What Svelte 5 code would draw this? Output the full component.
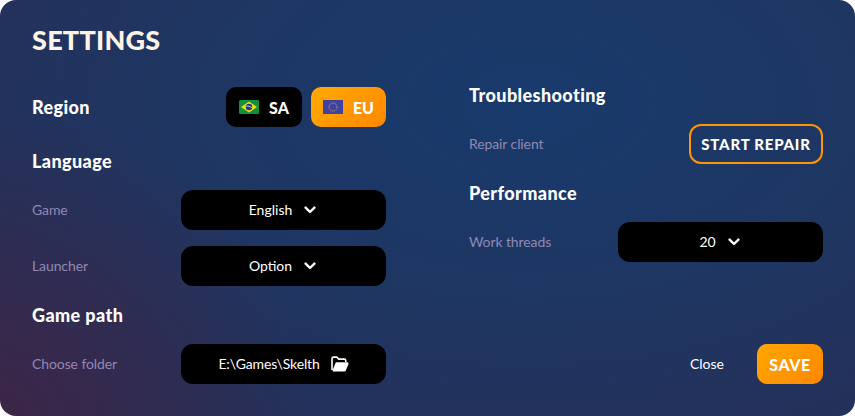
<script>
  let region = $state('EU');
</script>

{#snippet chevron()}
  <svg class="chevron" width="12" height="8" viewBox="0 0 12 8"><path d="M1.6 1.6 6 6 10.4 1.6" fill="none" stroke="#fff" stroke-width="2.4" stroke-linecap="round" stroke-linejoin="round"/></svg>
{/snippet}

<div class="modal">
  <h1>SETTINGS</h1>
  <div class="columns">
    <div class="col left">
      <div class="row">
        <h2 class="flat">Region</h2>
        <div class="regions">
          <button class="region sa" class:active={region === 'SA'} onclick={() => (region = 'SA')}>
            <svg width="20" height="14" viewBox="0 0 20 14">
              <rect width="20" height="14" rx="1.5" fill="#12913c"/>
              <path d="M10 1.6 18 7 10 12.400 2 7z" fill="#f4d90f"/>
              <circle cx="10" cy="7" r="3.200" fill="#1d3a86"/>
              <path d="M6.900 6.200c2-.4 4.400.2 6 1.600" fill="none" stroke="#fff" stroke-width=".7"/>
            </svg>
            <span>SA</span>
          </button>
          <button class="region eu" class:active={region === 'EU'} onclick={() => (region = 'EU')}>
            <svg width="20" height="14" viewBox="0 0 20 14">
              <rect width="20" height="14" fill="#3f42a0"/>
              <circle cx="10" cy="7" r="4" fill="none" stroke="#c9b955" stroke-width="1" stroke-dasharray="1 1.100"/>
            </svg>
            <span>EU</span>
          </button>
        </div>
      </div>
      <h2 class="lang">Language</h2>
      <div class="row">
        <span class="label">Game</span>
        <button class="select"><span>English</span>{@render chevron()}</button>
      </div>
      <div class="row next">
        <span class="label">Launcher</span>
        <button class="select"><span>Option</span>{@render chevron()}</button>
      </div>
      <h2>Game path</h2>
      <div class="row">
        <span class="label">Choose folder</span>
        <button class="select path">
          <span>E:\Games\Skelth</span>
          <svg width="18" height="16" viewBox="0 0 18 16">
            <path d="M1 14V2.700C1 1.800 1.700 1.100 2.600 1.100h3.200l2 2h5.400c.9 0 1.600.7 1.600 1.600V6" fill="none" stroke="#fff" stroke-width="1.600" stroke-linejoin="round"/>
            <path d="M2.800 15.500c-.9 0-1.400-.8-1.100-1.600l2.700-6.700c.2-.5.700-.9 1.300-.9h10.700c.9 0 1.400.8 1.100 1.600l-2.700 6.700c-.2.500-.7.900-1.300.9z" fill="#fff"/>
          </svg>
        </button>
      </div>
    </div>

    <div class="col right">
      <h2 class="flat">Troubleshooting</h2>
      <div class="row">
        <span class="label">Repair client</span>
        <button class="repair">START REPAIR</button>
      </div>
      <h2>Performance</h2>
      <div class="row">
        <span class="label">Work threads</span>
        <button class="select"><span>20</span>{@render chevron()}</button>
      </div>
      <div class="footer">
        <button class="close">Close</button>
        <button class="save">SAVE</button>
      </div>
    </div>
  </div>
</div>

<style>
  :global(body) {
    margin: 0;
    background: #fff;
  }

  .modal {
    box-sizing: border-box;
    width: 855px;
    height: 416px;
    padding: 22px 32px 32px;
    border-radius: 16px;
    color: #fff;
    font-family: "Lato", "Open Sans", sans-serif;
    background:
      radial-gradient(circle at 0% 100%, rgba(66, 36, 68, 0.8) 0, rgba(60, 36, 70, 0) 32%),
      radial-gradient(ellipse at 62% 25%, #183a6c 0, #1e3662 45%, #272e56 100%);
    background-color: #22335c;
  }

  h1 {
    margin: 0;
    height: 36px;
    line-height: 36px;
    font-size: 27px;
    font-weight: 900;
    letter-spacing: 0.25px;
    color: #fdf3e6;
  }

  .columns {
    display: grid;
    grid-template-columns: 354px 354px;
    justify-content: space-between;
    margin-top: 25px;
    height: 301px;
  }

  .col {
    display: flex;
    flex-direction: column;
  }

  .left {
    padding-top: 4px;
  }

  h2 {
    margin: 17px 0;
    height: 24px;
    line-height: 24px;
    font-size: 18px;
    font-weight: 900;
    letter-spacing: 0.4px;
  }

  h2.flat {
    margin: 0;
  }

  h2.lang {
    margin-top: 22px;
  }

  .right h2.flat {
    margin-bottom: 17px;
  }

  .row {
    display: flex;
    align-items: center;
    justify-content: space-between;
    height: 40px;
  }

  .next {
    margin-top: 16px;
  }

  .label {
    padding-bottom: 2px;
    font-size: 14px;
    letter-spacing: -0.1px;
    color: #9088b4;
  }

  button {
    border: 0;
    padding: 0;
    color: #fff;
    font-family: inherit;
    cursor: pointer;
  }

  .regions {
    display: flex;
    gap: 9px;
  }

  .region {
    display: flex;
    align-items: center;
    justify-content: center;
    gap: 10px;
    width: 76px;
    height: 40px;
    border-radius: 10px;
    background: #000;
    font-size: 16px;
    font-weight: 900;
  }

  .region.active {
    background: linear-gradient(135deg, #ffaa00, #ff8800);
  }

  .eu {
    width: 75px;
  }

  .select {
    box-sizing: border-box;
    display: flex;
    align-items: center;
    justify-content: center;
    gap: 12px;
    width: 205px;
    height: 40px;
    padding-right: 2px;
    border-radius: 12px;
    background: #000;
    font-size: 14px;
  }

  .select span {
    padding-bottom: 2px;
  }

  .path {
    gap: 11px;
    padding-right: 0;
  }

  .path span {
    letter-spacing: -0.15px;
  }

  .repair {
    box-sizing: border-box;
    width: 134px;
    height: 40px;
    padding-bottom: 1px;
    border: 2px solid #ff9500;
    border-radius: 12px;
    background: transparent;
    font-size: 15px;
    font-weight: 900;
    letter-spacing: 0.75px;
  }

  .footer {
    display: flex;
    align-items: center;
    justify-content: flex-end;
    gap: 33px;
    margin-top: auto;
  }

  .close {
    padding-bottom: 1px;
    background: none;
    font-size: 14px;
  }

  .save {
    width: 66px;
    height: 40px;
    border-radius: 10px;
    background: linear-gradient(135deg, #ffa800, #ff8600);
    font-size: 16px;
    font-weight: 900;
    letter-spacing: 0.5px;
  }
</style>
